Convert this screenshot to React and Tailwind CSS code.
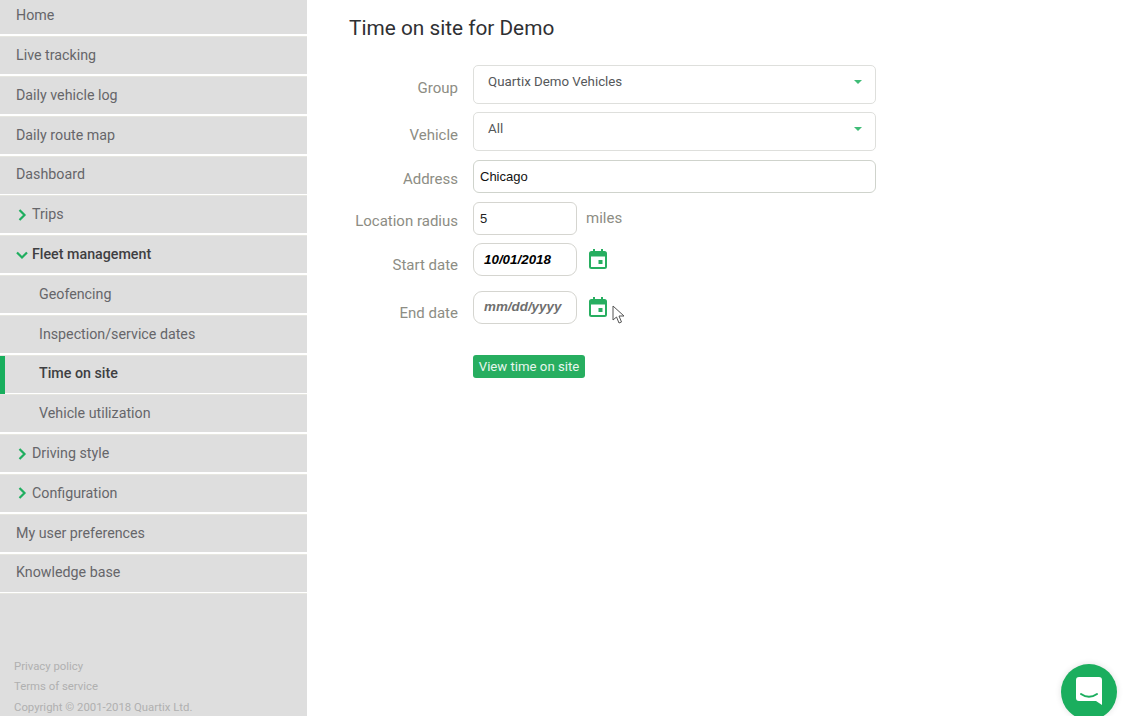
import React from "react";

const Chevron = ({ down }) => (
  <svg width="12" height="12" viewBox="0 0 12 12" fill="none" stroke="#1fae5f" strokeWidth="2.2" className="shrink-0">
    {down ? <path d="M1 3.5 L6 8.5 L11 3.5" /> : <path d="M3.5 1 L8.5 6 L3.5 11" />}
  </svg>
);

const Row = ({ children, indent, active, chev, bold }) => (
  <div className="relative flex h-[39.8px] shrink-0 flex-col">
    {active && <div className="absolute left-0 top-0 h-[38px] w-[5px] bg-[#18ae5d]" />}
    <div
      className={`flex h-[37px] items-center text-[14.25px] ${indent ? "pl-[39px]" : chev ? "gap-[4px] pl-[16px]" : "pl-[16px]"} ${bold ? "font-medium text-[#3f3f42]" : "text-[#66666a]"}`}
    >
      {chev && <Chevron down={chev === "down"} />}
      <span>{children}</span>
    </div>
    <div className="h-[1.8px] bg-white" />
    <div className="h-px bg-[#e6e6e0]" />
  </div>
);

const Label = ({ children, className = "" }) => (
  <div className={`w-[109px] shrink-0 whitespace-nowrap text-right text-[15px] text-[#8d8d84] ${className}`}>{children}</div>
);

const Select = ({ value }) => (
  <div className="flex h-[39px] w-[403px] items-center justify-between rounded-[5px] border border-[#dedfdc] pb-[5px] pl-[14px] pr-[13px] text-[13.3px] text-[#55585a]">
    <span>{value}</span>
    <span className="h-0 w-0 border-x-[4px] border-t-[4px] border-x-transparent border-t-[#3fbc77]" />
  </div>
);

const Cal = () => (
  <svg width="18" height="20" viewBox="0 0 18 20" className="shrink-0">
    <path d="M4 0h2v2h6V0h2v2h1.500A2.500 2.500 0 0 1 18 4.500v13a2.500 2.500 0 0 1-2.500 2.500h-13A2.500 2.500 0 0 1 0 17.500v-13A2.500 2.500 0 0 1 2.500 2H4z" fill="#27ae60" />
    <rect x="2" y="7.500" width="14" height="10.500" fill="#fff" />
    <rect x="9.500" y="11" width="4" height="4" fill="#27ae60" />
  </svg>
);

const items = [
  ["Home"],
  ["Live tracking"],
  ["Daily vehicle log"],
  ["Daily route map"],
  ["Dashboard"],
  ["Trips", { chev: "right" }],
  ["Fleet management", { chev: "down", bold: true }],
  ["Geofencing", { indent: true }],
  ["Inspection/service dates", { indent: true }],
  ["Time on site", { indent: true, active: true, bold: true }],
  ["Vehicle utilization", { indent: true }],
  ["Driving style", { chev: "right" }],
  ["Configuration", { chev: "right" }],
  ["My user preferences"],
  ["Knowledge base"],
];

export default function App() {
  return (
    <div className="relative flex h-[716px] w-[1131px] overflow-hidden bg-white font-['Roboto',sans-serif]">
      <aside className="flex h-[716px] w-[307px] shrink-0 flex-col overflow-hidden bg-[#dedede]">
        <div className="-mt-[2.6px] flex flex-col">
          {items.map(([label, props]) => (
            <Row key={label} {...(props || {})}>{label}</Row>
          ))}
        </div>
        <div className="mt-auto flex flex-col gap-[5px] pb-px pl-[14px] text-[11.35px] leading-[15.5px] text-[#b0b0b0]">
          <span>Privacy policy</span>
          <span>Terms of service</span>
          <span>Copyright © 2001-2018 Quartix Ltd.</span>
        </div>
      </aside>

      <main className="flex-1 pl-[42px]">
        <h1 className="mt-[14px] text-[20.8px] leading-[28px] text-[#2f3033]">Time on site for Demo</h1>
        <div className="mt-[23px] flex flex-col">
          <div className="flex items-center gap-[15px]">
            <Label className="pt-[7px]">Group</Label>
            <Select value="Quartix Demo Vehicles" />
          </div>
          <div className="mt-[8px] flex items-center gap-[15px]">
            <Label className="pt-[7px]">Vehicle</Label>
            <Select value="All" />
          </div>
          <div className="mt-[9px] flex items-center gap-[15px]">
            <Label className="pt-[5px]">Address</Label>
            <div className="flex h-[33px] w-[403px] items-center rounded-[6px] border border-[#cfd3cc] pl-[6px] pt-[1px] font-['Liberation_Sans',sans-serif] text-[13px] text-[#111]">Chicago</div>
          </div>
          <div className="mt-[9px] flex items-center gap-[15px]">
            <Label className="pt-[5px]">Location radius</Label>
            <div className="flex h-[33px] w-[104px] items-center rounded-[6px] border border-[#d5d5d0] pl-[6px] font-['Liberation_Sans',sans-serif] text-[13px] text-[#222]">5</div>
            <span className="-ml-[6px] pb-[1px] text-[15px] text-[#8d8d84]">miles</span>
          </div>
          <div className="mt-[8px] flex items-center gap-[15px]">
            <Label className="pt-[11px]">Start date</Label>
            <div className="flex h-[33px] w-[104px] items-center rounded-[9px] border border-[#d5d5d0] pl-[10px] font-['Liberation_Sans',sans-serif] text-[13.4px] font-bold italic text-black">10/01/2018</div>
            <div className="-ml-[3px] pb-[1px]"><Cal /></div>
          </div>
          <div className="mt-[14px] flex items-center gap-[15px]">
            <Label className="pt-[11px]">End date</Label>
            <div className="flex h-[33px] w-[104px] items-center rounded-[9px] border border-[#d5d5d0] pl-[10px] font-['Liberation_Sans',sans-serif] text-[13.4px] font-bold italic text-[#6f6f6f]">mm/dd/yyyy</div>
            <div className="-ml-[3px] pb-[1px]"><Cal /></div>
          </div>
          <div className="ml-[124px] mt-[31px] flex h-[23px] w-[112px] items-center justify-center rounded-[3px] bg-[#27ae60] text-[13.2px] text-[#e8f6ee]">View time on site</div>
        </div>
      </main>

      <svg className="absolute left-[612px] top-[305px]" width="14" height="20" viewBox="0 0 14 20" fill="#fff" stroke="#555" strokeWidth="1">
        <path d="M1 1 L1 15 L4.500 12 L7 18 L9.500 17 L7 11 L12 11 Z" />
      </svg>

      <div className="absolute left-[1061px] top-[664px] flex h-[56px] w-[56px] items-center justify-center rounded-full bg-[#1bae5e] shadow-[0_0_6px_rgba(0,0,0,0.12)]">
        <svg width="28" height="30" viewBox="0 0 28 30" className="-mt-[2px]">
          <path d="M4 1h20a3 3 0 0 1 3 3v25l-6-4H4a3 3 0 0 1-3-3V4a3 3 0 0 1 3-3z" fill="#fff" />
          <path d="M6 18c5 3.500 11 3.500 16 0" fill="none" stroke="#1bae5e" strokeWidth="2" strokeLinecap="round" />
        </svg>
      </div>
    </div>
  );
}
